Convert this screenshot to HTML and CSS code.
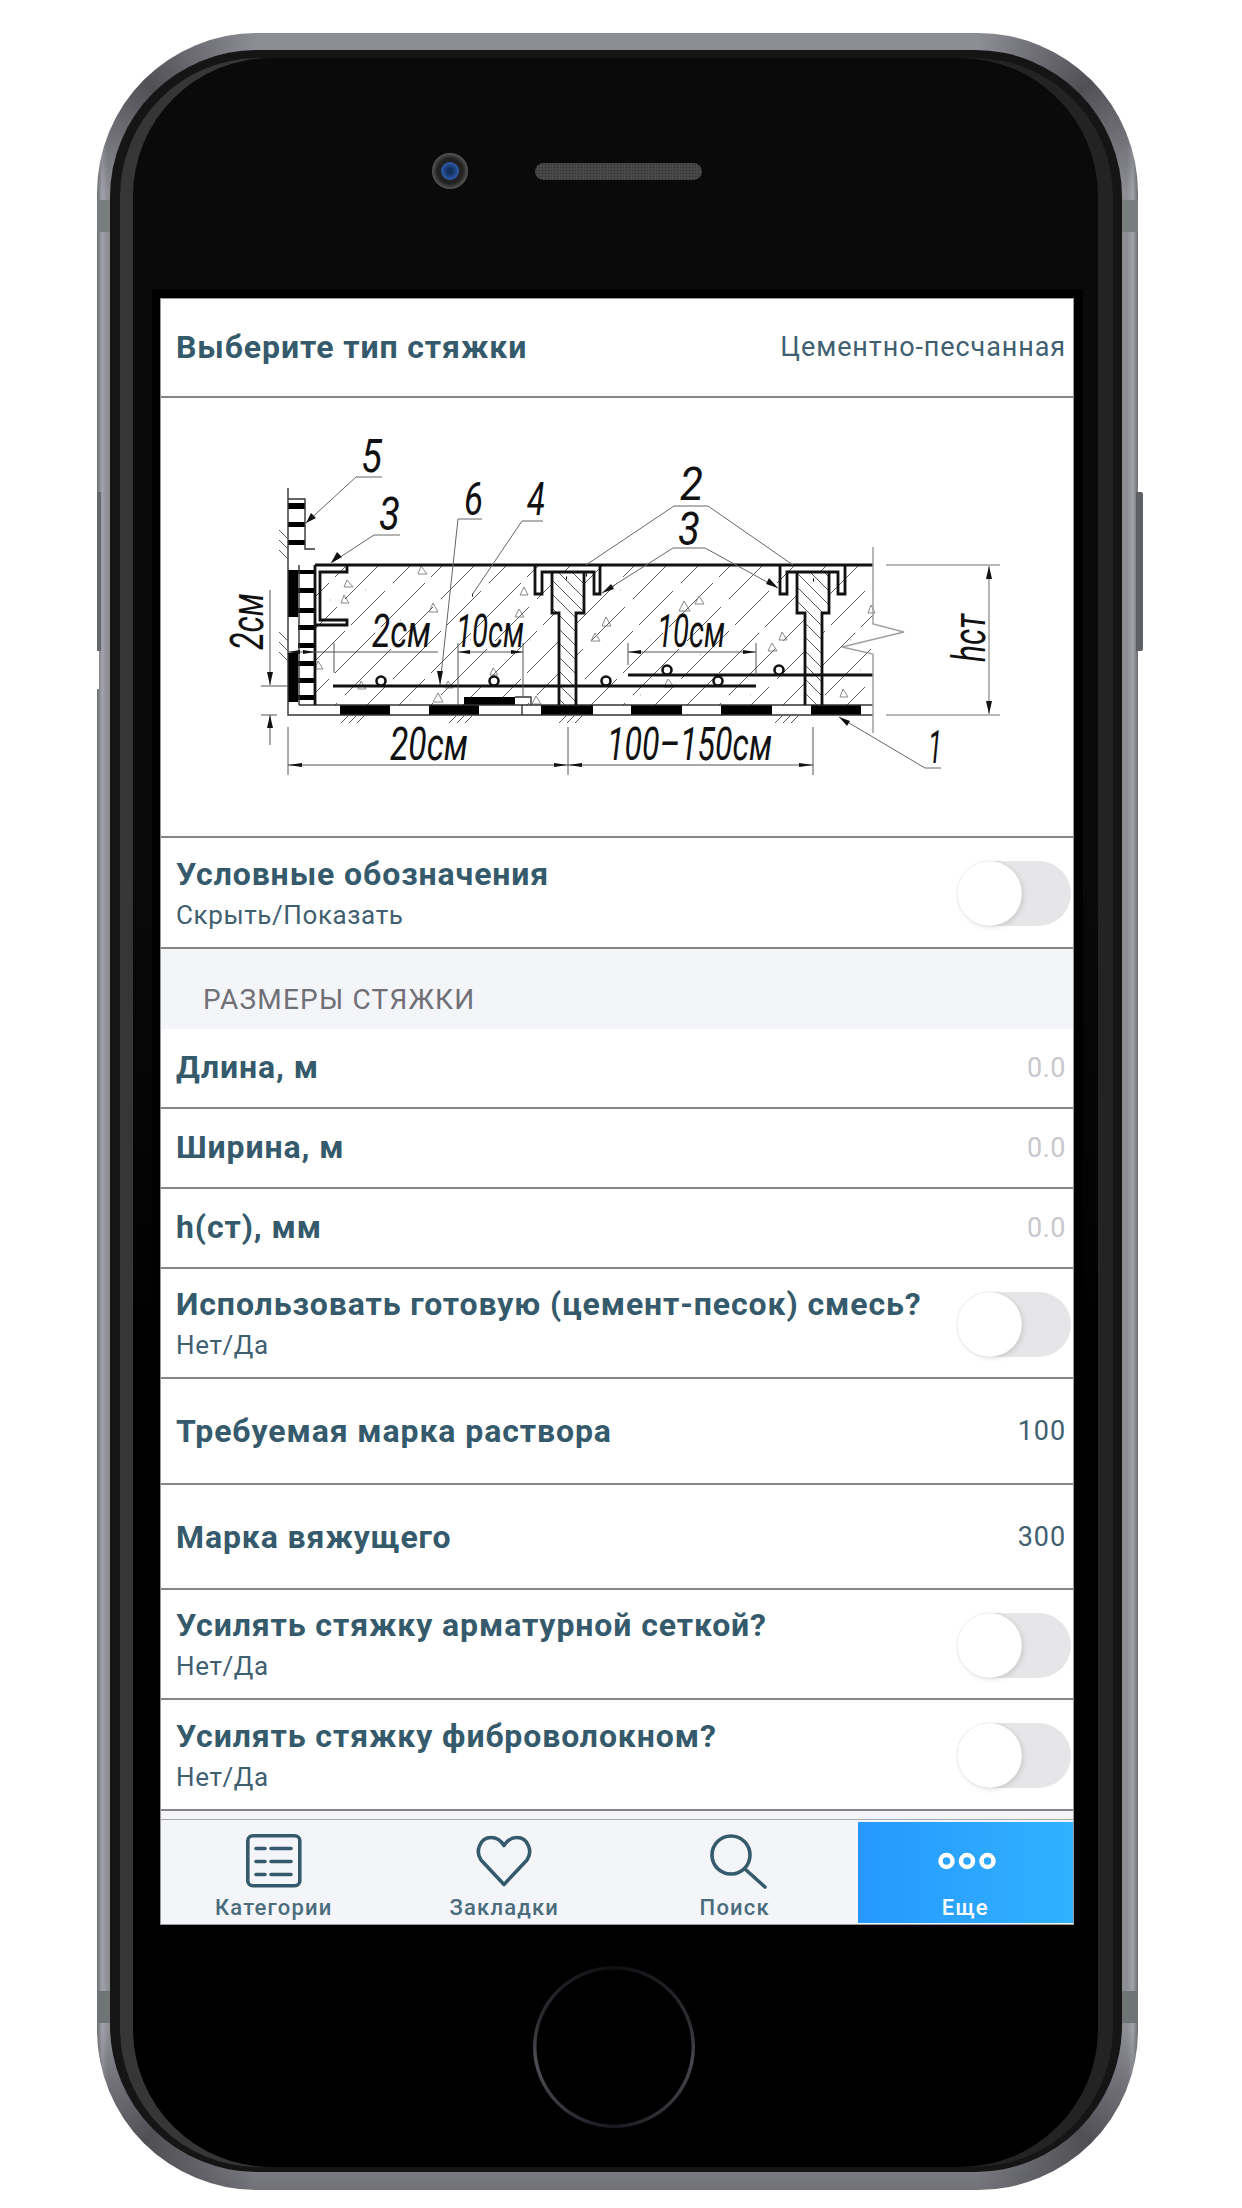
FILE: index.html
```html
<!DOCTYPE html>
<html lang="ru">
<head>
<meta charset="utf-8">
<title>Стяжка</title>
<link rel="stylesheet" href="styles.css">
</head>
<body>
<div class="phone">
  <div class="btn-left"></div>
  <div class="notch-left"></div>
  <div class="btn-right"></div>
  <div class="rim">
    <div class="face">
      <div class="earpiece">
        <div class="camera"><div class="lens"></div></div>
        <div class="speaker"></div>
      </div>
      <div class="screen-frame">
        <div class="screen">
          <div class="scroll">
            <div class="row h-head">
              <span class="title">Выберите тип стяжки</span>
              <span class="value">Цементно-песчанная</span>
            </div>
            <div class="row h-draw">
              <svg class="drawing" viewBox="161 398 912 438" width="912" height="438">
                <defs>
                  <pattern id="hatch" width="96" height="96" patternUnits="userSpaceOnUse" x="315" y="565">
                    <path class="hair" d="M0 96L30 66M36 60L70 26M78 18L96 0M0 32L14 18M20 12L32 0M0 64L22 42M30 34L64 0M32 96L60 68M66 62L96 32M64 96L76 84M84 76L96 64"/>
                  </pattern>
                  <pattern id="hatch-t" width="14" height="14" patternUnits="userSpaceOnUse">
                    <path class="hair" d="M0 0L14 14M-7 7L7 21M7 -7L21 7"/>
                  </pattern>
                </defs>
                <rect x="316" y="566" width="557" height="139" fill="url(#hatch)"/>
                <rect x="553" y="573" width="30" height="40" fill="#fff"/>
                <rect x="560" y="613" width="16" height="92" fill="#fff"/>
                <rect x="798" y="573" width="30" height="40" fill="#fff"/>
                <rect x="806" y="613" width="16" height="92" fill="#fff"/>
                <rect x="553" y="573" width="30" height="40" fill="url(#hatch-t)"/>
                <rect x="560" y="613" width="16" height="92" fill="url(#hatch-t)"/>
                <rect x="798" y="573" width="30" height="40" fill="url(#hatch-t)"/>
                <rect x="806" y="613" width="16" height="92" fill="url(#hatch-t)"/>
                <path class="tri" d="M421 566l6 8h-9zM347 580l6 7h-9zM344 595l5 8h-8zM433 603l5 9h-9zM524 587l4 8h-8zM519 609l5 8h-9zM318 661l5 8h-8zM448 681l5 7h-8zM438 693l5 9h-10zM536 696l5 8h-9zM684 601l6 10h-11zM699 596l5 8h-9zM606 617l5 9h-9zM595 633l5 8h-9zM772 643l5 8h-9zM668 679l6 8h-10zM493 668l5 7h-8zM361 681l5 8h-8zM782 632l5 8h-8zM843 689l5 8h-8zM871 605l4 8h-7z"/>
                <path class="dots" d="M330 600h1M365 590h1M400 620h1M470 640h1M505 660h1M530 640h1M620 590h1M650 640h1M700 655h1M740 620h1M760 600h1M850 640h1M860 670h1M410 700h1M640 695h1M690 700h1M750 695h1"/>
                <path class="dot-b" d="M472 595h1M566 578h1M586 575h1M813 580h1"/>
                <g class="solid">
                  <rect x="288" y="570" width="10" height="47"/>
                  <rect x="288" y="653" width="10" height="49"/>
                  <rect x="288" y="503" width="17" height="6"/>
                  <rect x="288" y="522" width="17" height="5"/>
                  <rect x="288" y="540" width="17" height="5"/>
                  <rect x="298" y="570" width="17" height="4"/>
                  <rect x="298" y="588" width="17" height="5"/>
                  <rect x="298" y="608" width="17" height="5"/>
                  <rect x="298" y="625" width="17" height="5"/>
                  <rect x="298" y="643" width="17" height="5"/>
                  <rect x="298" y="661" width="17" height="5"/>
                  <rect x="298" y="678" width="17" height="5"/>
                  <rect x="298" y="695" width="17" height="5"/>
                  <rect x="340" y="705" width="50" height="10"/>
                  <rect x="429" y="705" width="50" height="10"/>
                  <rect x="541" y="705" width="52" height="10"/>
                  <rect x="631" y="705" width="51" height="10"/>
                  <rect x="721" y="705" width="51" height="10"/>
                  <rect x="811" y="705" width="50" height="10"/>
                  <rect x="464" y="697" width="51" height="8"/>
                </g>
                <path class="thin" d="M288 499h17v50h10M305 549v-50M288 488V715H873M299 565v140M299 705H873M515 697h16v8M522 705v10M515 705h7"/>
                <path class="thick" d="M315 565H873M315 565V705M347 565v7h-27v48h27v5h-32M333 686H756M628 675H873M535 565v29h7v-22h52v22h6v-29M552 572v41h7v92M584 572v41h-8v92M780 565v29h7v-22h51v22h7v-29M797 572v41h8v92M829 572v41h-7v92"/>
                <g class="rings">
                  <circle cx="381" cy="681" r="4.5"/><circle cx="494" cy="681" r="4.5"/><circle cx="606" cy="681" r="4.5"/><circle cx="718" cy="681" r="4.5"/><circle cx="667" cy="670" r="4.5"/><circle cx="779" cy="670" r="4.5"/>
                </g>
                <path class="hair" d="M341 723l8-8M349 723l8-8M357 723l8-8M449 723l8-8M457 723l8-8M465 723l8-8M559 723l8-8M567 723l8-8M575 723l8-8M775 723l8-8M783 723l8-8M791 723l8-8M279 530l9 9M279 540l9 9M279 550l9 9M279 632l9 9M279 642l9 9M279 652l9 9"/>
                <path class="leader" d="M382 477H356L306 523M400 535H374L331 563M482 519H458L440 685M543 521H522L472 595M708 506H674L586 565M708 506L793 565M705 548H673L602 593M705 548L778 588M941 768H925L839 717"/>
                <path class="dim" d="M270 590V685M270 715V745M261 686H288M261 715H277M288 727V775M568 727V775M813 727V775M288 765H813M288 652H438M334 643V673M458 652H523M458 643V705M523 643V697M628 652H756M628 643V665M756 643V675"/>
                <path class="gray-line" d="M873 547V624L904 632L842 647L873 654V733M886 565H1000M886 715H1000M989 566V714"/>
                <path class="arrow" d="M306 523l5-10 5 5zM331 563l6-11 5 5zM440 685l-3-14h6zM602 593l9-9 3 5zM778 588l-12-4 3-6zM839 717l11 4-3 5zM270 685l-3-13h6zM270 715l-3 13h6zM288 765l14-2v4zM568 765l-14-2v4zM568 765l14-2v4zM813 765l-14-2v4zM288 652l12-2v4zM315 652l-12-2v4zM458 652l12-2v4zM523 652l-12-2v4zM628 652l13-2v4zM756 652l-13-2v4zM989 566l-3 13h6zM989 714l-3-13h6z"/>
                <text class="gost" x="361" y="472" textLength="21" lengthAdjust="spacingAndGlyphs">5</text>
                <text class="gost" x="379" y="530" textLength="21" lengthAdjust="spacingAndGlyphs">3</text>
                <text class="gost" x="464" y="515" textLength="19" lengthAdjust="spacingAndGlyphs">6</text>
                <text class="gost" x="527" y="515" textLength="18" lengthAdjust="spacingAndGlyphs">4</text>
                <text class="gost" x="680" y="500" textLength="23" lengthAdjust="spacingAndGlyphs">2</text>
                <text class="gost" x="678" y="545" textLength="22" lengthAdjust="spacingAndGlyphs">3</text>
                <text class="gost" x="928" y="763" textLength="14" lengthAdjust="spacingAndGlyphs">1</text>
                <text class="gost" x="372" y="647" textLength="59" lengthAdjust="spacingAndGlyphs">2см</text>
                <text class="gost" x="456" y="647" textLength="68" lengthAdjust="spacingAndGlyphs">10см</text>
                <text class="gost" x="657" y="647" textLength="68" lengthAdjust="spacingAndGlyphs">10см</text>
                <text class="gost" x="390" y="760" textLength="78" lengthAdjust="spacingAndGlyphs">20см</text>
                <text class="gost" x="607" y="760" textLength="165" lengthAdjust="spacingAndGlyphs">100–150см</text>
                <text class="gost" transform="translate(263 650) rotate(-90)" textLength="57" lengthAdjust="spacingAndGlyphs">2см</text>
                <text class="gost" transform="translate(985 662) rotate(-90)" textLength="48" lengthAdjust="spacingAndGlyphs">hст</text>
              </svg>
            </div>
            <div class="row h-two">
              <div class="stack"><span class="title">Условные обозначения</span><span class="sub">Скрыть/Показать</span></div>
              <div class="toggle"><div class="knob"></div></div>
            </div>
            <div class="section">РАЗМЕРЫ СТЯЖКИ</div>
            <div class="row h-field"><span class="title">Длина, м</span><span class="hint">0.0</span></div>
            <div class="row h-field"><span class="title">Ширина, м</span><span class="hint">0.0</span></div>
            <div class="row h-field"><span class="title">h(ст), мм</span><span class="hint">0.0</span></div>
            <div class="row h-two-b">
              <div class="stack"><span class="title">Использовать готовую (цемент-песок) смесь?</span><span class="sub">Нет/Да</span></div>
              <div class="toggle"><div class="knob"></div></div>
            </div>
            <div class="row h-pick"><span class="title">Требуемая марка раствора</span><span class="value">100</span></div>
            <div class="row h-pick-b"><span class="title">Марка вяжущего</span><span class="value">300</span></div>
            <div class="row h-two-b">
              <div class="stack"><span class="title">Усилять стяжку арматурной сеткой?</span><span class="sub">Нет/Да</span></div>
              <div class="toggle"><div class="knob"></div></div>
            </div>
            <div class="row h-two">
              <div class="stack"><span class="title">Усилять стяжку фиброволокном?</span><span class="sub">Нет/Да</span></div>
              <div class="toggle"><div class="knob"></div></div>
            </div>
            <div class="spacer"></div>
          </div>
          <nav class="tabbar">
            <div class="tab">
              <svg class="icon" viewBox="0 0 56 54" width="56" height="54">
                <rect x="1.8" y="1.8" width="52" height="50" rx="5"/>
                <path d="M10 14.5h9M25 14.5h20M10 27.5h9M25 27.5h20M10 40.5h9M25 40.5h20"/>
              </svg>
              <span class="tab-label">Категории</span>
            </div>
            <div class="tab">
              <svg class="icon" viewBox="0 0 56 54" width="56" height="54">
                <path d="M28 50.5L5 26C-1 17.500 4 3.500 15 3.500C21 3.500 25 6.500 28 11.500C31 6.500 35 3.500 41 3.500C52 3.500 57 17.500 51 26Z"/>
              </svg>
              <span class="tab-label">Закладки</span>
            </div>
            <div class="tab">
              <svg class="icon" viewBox="0 0 56 54" width="56" height="54">
                <circle cx="24" cy="21" r="19"/>
                <path d="M38 35L58 53"/>
              </svg>
              <span class="tab-label">Поиск</span>
            </div>
            <div class="tab tab-active">
              <svg class="icon" viewBox="0 0 56 54" width="56" height="54">
                <circle cx="9.500" cy="27" r="6"/><circle cx="30" cy="27" r="6"/><circle cx="50.500" cy="27" r="6"/>
              </svg>
              <span class="tab-label">Еще</span>
            </div>
          </nav>
        </div>
      </div>
      <div class="chin"><div class="home"></div></div>
    </div>
  </div>
</div>
</body>
</html>
```

FILE: styles.css
```css
* { box-sizing: border-box; }
html, body { margin: 0; background: #fff; }
body {
  width: 1242px;
  height: 2208px;
  overflow: hidden;
  padding: 33px 0 0 97px;
  font-family: Roboto, "Noto Sans", sans-serif;
}

/* device */
.phone {
  position: relative;
  width: 1041px;
  height: 2157px;
  padding: 17px 16px 18px 13px;
  border-radius: 160px;
  background:
    conic-gradient(from 270deg at 100% 100%, rgba(30, 30, 34, 0) 0deg, rgba(30, 30, 34, 0.55) 45deg, rgba(30, 30, 34, 0) 90deg) 0 0 / 160px 160px no-repeat,
    conic-gradient(from 0deg at 0 100%, rgba(30, 30, 34, 0) 0deg, rgba(30, 30, 34, 0.55) 45deg, rgba(30, 30, 34, 0) 90deg) 100% 0 / 160px 160px no-repeat,
    conic-gradient(from 180deg at 100% 0, rgba(30, 30, 34, 0) 0deg, rgba(30, 30, 34, 0.55) 45deg, rgba(30, 30, 34, 0) 90deg) 0 100% / 160px 160px no-repeat,
    conic-gradient(from 90deg at 0 0, rgba(30, 30, 34, 0) 0deg, rgba(30, 30, 34, 0.55) 45deg, rgba(30, 30, 34, 0) 90deg) 100% 100% / 160px 160px no-repeat,
    linear-gradient(to bottom,
      transparent 167px, #787d7d 167px, #787d7d 199px, transparent 199px,
      transparent 1958px, #6f7474 1958px, #6f7474 1990px, transparent 1990px),
    linear-gradient(to bottom, rgba(0, 0, 0, 0) 0, rgba(0, 0, 0, 0) 2100px, rgba(0, 0, 0, 0.2) 2157px),
    linear-gradient(to right, #6c6d72 0, #a2a3aa 5px, #8d8e94 11px, #8d8e94 1030px, #a2a3aa 1036px, #6c6d72 100%);
}
.btn-left { position: absolute; left: 0; top: 459px; width: 4px; height: 159px; background: #66676c; }
.notch-left { position: absolute; left: 0; top: 618px; width: 2px; height: 38px; background: #fff; }
.btn-right { position: absolute; right: -5px; top: 459px; width: 7px; height: 159px; background: #5f6065; border-radius: 0 2px 2px 0; }
.rim {
  height: 100%;
  padding: 8px 9px 5px 10px;
  border-radius: 147px;
  background: #151515;
}
.face {
  height: 100%;
  padding: 0 30px 0 32px;
  border-radius: 138px;
  background: linear-gradient(to bottom, #0a0a0a 0, #0a0a0a 800px, #000 1300px);
  box-shadow: inset 13px 0 0 #363636, inset -15px 0 0 #232323;
  display: flex;
  flex-direction: column;
}
.earpiece {
  height: 231px;
  flex: none;
  padding: 95px 0 0 280px;
  display: flex;
  align-items: flex-start;
  gap: 67px;
}
.camera {
  width: 36px;
  height: 36px;
  border-radius: 50%;
  background: radial-gradient(circle, #222 50%, #555 70%, #333 100%);
  display: flex;
  align-items: center;
  justify-content: center;
}
.lens { width: 18px; height: 18px; border-radius: 50%; background: radial-gradient(circle, #14305c 20%, #2e5cab 70%, #1a3b78 100%); }
.speaker {
  width: 167px;
  height: 17px;
  margin-top: 10px;
  border-radius: 9px;
  background: radial-gradient(circle, #2c2c2c 35%, transparent 40%) 0 0 / 3px 3px, #474747;
}
.screen-frame {
  flex: none;
  border: solid #000;
  border-width: 9px 9px 0 8px;
  background: #000;
}
.screen {
  height: 1627px;
  display: flex;
  flex-direction: column;
  background: #f4f5f9;
  border: 1px solid #9a9a9a;
}
.chin { flex: 1; padding-top: 41px; display: flex; justify-content: center; padding-right: 8px; }
.home {
  width: 162px;
  height: 162px;
  border-radius: 50%;
  background:
    radial-gradient(closest-side, #000 77px, transparent 78px),
    conic-gradient(#0e0f12 0deg, #2a2c30 70deg, #45474c 100deg, #2c2e33 150deg, #16171b 180deg, #2c2e33 210deg, #4d4f54 260deg, #2a2c30 290deg, #0e0f12 360deg);
}

/* list */
.scroll { flex: 1; min-height: 0; display: flex; flex-direction: column; }
.row {
  flex: none;
  background: #fff;
  border-bottom: 2px solid #858585;
  padding: 0 7px 0 15px;
  display: flex;
  align-items: center;
  justify-content: space-between;
}
.h-head { height: 99px; padding-bottom: 2px; }
.h-draw { height: 440px; padding: 0; justify-content: flex-start; }
.h-two { height: 111px; padding-right: 2px; }
.h-two-b { height: 110px; padding-right: 2px; }
.h-field { height: 80px; padding-bottom: 2px; }
.h-pick { height: 106px; }
.h-pick-b { height: 105px; }
.stack { display: flex; flex-direction: column; gap: 6px; }
.title {
  font-size: 32px;
  line-height: 38px;
  font-weight: 700;
  letter-spacing: 0.9px;
  color: #355a6b;
}
.value {
  font-size: 27px;
  letter-spacing: 0.9px;
  color: #3f6070;
}
.sub {
  font-size: 26px;
  line-height: 32px;
  letter-spacing: 0.6px;
  color: #3f6070;
}
.hint { font-size: 27px; margin-top: 2px; color: #c7c7cd; letter-spacing: 0.5px; }
.section {
  flex: none;
  height: 80px;
  padding: 33px 0 0 42px;
  font-size: 28px;
  line-height: 36px;
  letter-spacing: 1.2px;
  color: #707076;
  background: #f4f5f9;
}
.toggle {
  width: 114px;
  height: 65px;
  margin-top: 2px;
  border-radius: 33px;
  background: #e6e6e8;
}
.knob {
  width: 65px;
  height: 65px;
  border-radius: 50%;
  background: #fff;
  box-shadow: 2px 2px 5px rgba(0, 0, 0, 0.1), 0 0 1px rgba(0, 0, 0, 0.2);
}
.spacer { flex: 1; background: #f4f5f9; }

/* tab bar */
.tabbar {
  flex: none;
  height: 105px;
  padding: 2px 0 1px 5px;
  border-top: 1px solid #a9a9ad;
  background: #f4f5f9;
  display: flex;
  gap: 15px;
}
.tab {
  width: 216px;
  padding-top: 12px;
  display: flex;
  flex-direction: column;
  align-items: center;
}
.tab-active { background: linear-gradient(to right, #2698fe, #30b2ff); }
.icon { flex: none; fill: none; stroke: #355a6b; stroke-width: 3.600; stroke-linecap: round; stroke-linejoin: round; overflow: visible; }
.tab-active .icon { stroke: #fff; stroke-width: 4.500; }
.tab-label {
  margin-top: 6px;
  font-size: 22px;
  line-height: 28px;
  font-weight: 500;
  letter-spacing: 1.2px;
  color: #4a6c7c;
}
.tab-active .tab-label { color: #fff; }

/* drawing */
.drawing { display: block; }
.hair { fill: none; stroke: #5c5c5c; stroke-width: 1; }
.thin { fill: none; stroke: #333; stroke-width: 1.400; }
.thick { fill: none; stroke: #111; stroke-width: 2.800; }
.solid rect { fill: #000; }
.rings circle { fill: #fff; stroke: #111; stroke-width: 2.600; }
.leader { fill: none; stroke: #666; stroke-width: 1; }
.dim { fill: none; stroke: #555; stroke-width: 1; }
.gray-line { fill: none; stroke: #a0a0a0; stroke-width: 1.500; }
.arrow { fill: #111; stroke: none; }
.tri { fill: none; stroke: #888; stroke-width: 1; }
.dots { fill: none; stroke: #aaa; stroke-width: 1; }
.dot-b { fill: none; stroke: #000; stroke-width: 3; }
.gost {
  font-family: Roboto, sans-serif;
  font-style: italic;
  font-weight: 400;
  font-size: 46px;
  fill: #111;
}
```
